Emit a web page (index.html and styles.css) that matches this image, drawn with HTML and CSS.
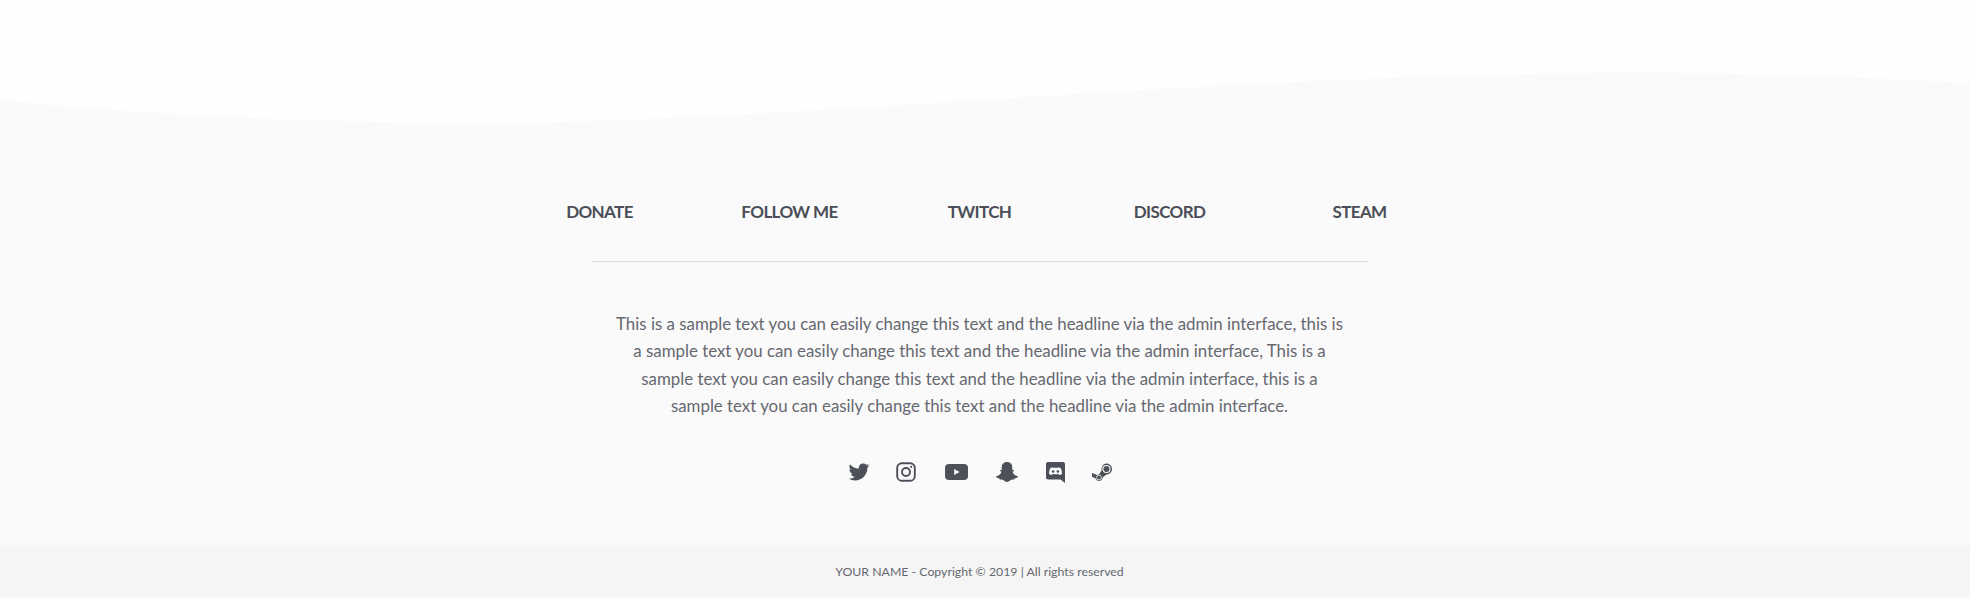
FILE: index.html
```html
<!DOCTYPE html>
<html lang="en">
<head>
    <meta charset="UTF-8">
    <title>Footer</title>
    <link rel="stylesheet" href="styles.css">
</head>
<body>
    <svg class="wave" viewBox="0 0 1970 124" preserveAspectRatio="none">
        <path d="M0 0H1970V83C1880 78 1750 72 1600 73C1200 76 800 120 500 123C350 124 150 116 0 100Z" fill="#fefefe"/>
    </svg>

    <div class="content">
        <nav class="menu">
            <a href="#">DONATE</a>
            <a href="#">FOLLOW ME</a>
            <a href="#">TWITCH</a>
            <a href="#">DISCORD</a>
            <a href="#">STEAM</a>
        </nav>

        <hr class="line">

        <p class="about">This is a sample text you can easily change this text and the headline via the admin interface, this is<br>
        a sample text you can easily change this text and the headline via the admin interface, This is a<br>
        sample text you can easily change this text and the headline via the admin interface, this is a<br>
        sample text you can easily change this text and the headline via the admin interface.</p>

        <div class="social">
            <a href="#" class="twitter"><svg viewBox="1 3.500 22 18" width="22" height="18"><path d="M22.46 6c-.77.35-1.6.58-2.46.69.88-.53 1.56-1.37 1.88-2.38-.83.5-1.75.85-2.72 1.05C18.37 4.5 17.26 4 16 4c-2.35 0-4.27 1.92-4.27 4.29 0 .34.04.67.11.98C8.28 9.09 5.11 7.38 3 4.79c-.37.63-.58 1.37-.58 2.15 0 1.49.75 2.81 1.91 3.56-.71 0-1.37-.2-1.95-.5v.03c0 2.08 1.48 3.82 3.44 4.21a4.22 4.22 0 0 1-1.93.07 4.28 4.28 0 0 0 4 2.98 8.521 8.521 0 0 1-5.33 1.84c-.34 0-.68-.02-1.02-.06C3.44 20.29 5.7 21 8.12 21 16 21 20.33 14.46 20.33 8.79c0-.19 0-.37-.01-.56.84-.6 1.56-1.36 2.14-2.23z"/></svg></a>
            <a href="#" class="instagram"><svg viewBox="0 0 20 20" width="20" height="20"><rect x="1.200" y="1.200" width="17.600" height="17.600" rx="4.600" fill="none" stroke="#4d4f59" stroke-width="1.900"/><circle cx="10" cy="10" r="4" fill="none" stroke="#4d4f59" stroke-width="1.900"/><circle cx="15.200" cy="4.800" r="1.100"/></svg></a>
            <a href="#" class="youtube"><svg viewBox="0 0 23 16" width="23" height="16"><rect width="23" height="16" rx="4"/><path d="M9.200 4.900L14.600 8L9.200 11.100Z" fill="#fafafa"/></svg></a>
            <a href="#" class="snapchat"><svg viewBox="0 0 22 20" width="22" height="20"><path d="M11 0C7.600 0 5.700 2.400 5.700 5.300V8C5 7.900 4.300 7.800 4 8.300C3.800 8.900 4.700 9.500 5.500 9.800C5.200 11.500 3.200 13.600 .4 14.300C0 14.500 0 15 .5 15.400C1.200 15.900 2.500 16 3.200 16.300C3.500 17 3.500 17.600 4.200 17.600C5.500 17.400 6.700 17.400 7.700 18.300C8.700 19.200 9.800 20 11 20C12.200 20 13.300 19.200 14.300 18.300C15.300 17.400 16.500 17.400 17.800 17.600C18.500 17.600 18.500 17 18.800 16.300C19.500 16 20.800 15.900 21.500 15.400C22 15 22 14.500 21.600 14.300C18.800 13.600 16.800 11.500 16.500 9.800C17.300 9.500 18.200 8.900 18 8.300C17.700 7.800 17 7.900 16.300 8V5.300C16.300 2.400 14.400 0 11 0Z"/></svg></a>
            <a href="#" class="discord"><svg viewBox="0 0 19 21" width="19" height="21"><path d="M2 0H17C18.100 0 19 .9 19 2V21L14.500 17.500H2C.9 17.500 0 16.600 0 15.500V2C0 .9 .9 0 2 0Z"/><path d="M6.700 5.200C5.500 5.400 4.700 5.800 4.200 6.200C3.500 7.700 3 9.500 3 11.700C3.800 12.500 4.900 12.900 5.800 12.900L6.500 12C7.700 12.300 11.300 12.300 12.500 12L13.200 12.900C14.100 12.900 15.200 12.500 16 11.700C16 9.500 15.500 7.700 14.800 6.200C14.300 5.800 13.500 5.400 12.300 5.200L12 5.800C10.800 5.600 8.200 5.600 7 5.800Z" fill="#fafafa"/><circle cx="7.100" cy="9.500" r="1.300"/><circle cx="11.900" cy="9.500" r="1.300"/></svg></a>
            <a href="#" class="steam"><svg viewBox="0 0 20 18" width="20" height="18"><path d="M0 10L5 12C5.500 11.500 6.300 11.300 7 11.400L9.500 7.500C9.400 3.500 11.500 .5 14.500 .5C17.500 .5 20 3 20 6C20 9 17.500 11.500 14.500 11.500L10.500 14.500C10.500 16.500 9 18 7 18C5.300 18 3.900 16.900 3.500 15.300L0 13.800Z"/><circle cx="14.500" cy="6" r="4.100" fill="#fafafa"/><circle cx="14.500" cy="6" r="3"/><circle cx="7" cy="14.500" r="2.400" fill="none" stroke="#fafafa" stroke-width=".8"/></svg></a>
        </div>
    </div>

    <footer class="copyright">YOUR NAME - Copyright © 2019 | All rights reserved</footer>
</body>
</html>
```

FILE: styles.css
```css
html{
    background-color: #fafafa;
}

body{
    margin: 0;
    font-family: Lato, "Open Sans", sans-serif;
    color: #4d4f59;
}

.wave{
    display: block;
    width: 100%;
    height: 124px;
}

.content{
    padding-right: 11px;
}

.menu{
    display: grid;
    grid-template-columns: repeat(5, 190px);
    justify-content: center;
    padding-top: 77px;
    line-height: 22px;
    text-align: center;
}

.menu a{
    color: #4b4e57;
    font-size: 17px;
    font-weight: 700;
    letter-spacing: -0.6px;
    text-decoration: none;
}

.line{
    width: 777px;
    height: 1px;
    margin: 38px auto 0;
    border: 0;
    background-color: #dedfe0;
}

.about{
    margin: 48px 0 0;
    color: #666870;
    font-size: 16.85px;
    line-height: 27.3px;
    text-align: center;
}

.social{
    display: flex;
    justify-content: center;
    align-items: center;
    height: 24px;
    margin-top: 41px;
}

.social a{
    display: flex;
    fill: #4d4f59;
}

.social .instagram{
    margin-left: 26px;
}

.social .youtube{
    margin-left: 29px;
}

.social .snapchat{
    margin-left: 28px;
}

.social .discord{
    margin-left: 28px;
}

.social .steam{
    margin-left: 27px;
}

.copyright{
    height: 50px;
    margin-top: 63px;
    padding-right: 11px;
    background-color: #f5f5f5;
    color: #666870;
    font-size: 12.3px;
    line-height: 50px;
    text-align: center;
}
```
